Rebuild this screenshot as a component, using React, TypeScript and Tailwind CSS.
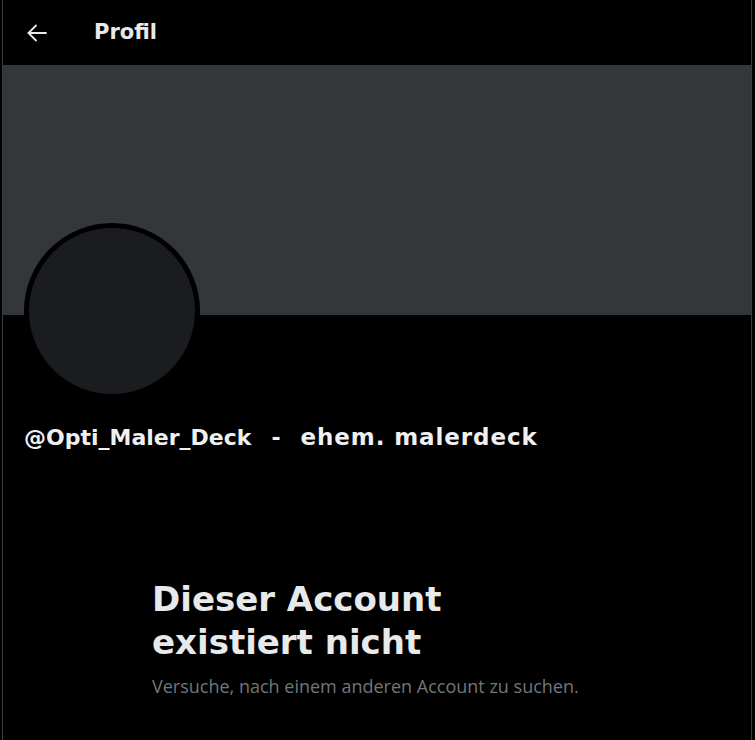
export default function App() {
  return (
    <main
      className="min-h-screen w-full bg-black text-[#e7e9ea]"
      style={{ fontFamily: '"DejaVu Sans", "Open Sans", sans-serif' }}
    >
      <div className="ml-[2px] mr-[3px] h-[740px] border-x border-[#3a3d40] bg-black">
        {/* Header */}
        <header className="flex h-[65px] items-center">
          <button className="ml-[24px] flex h-[20px] w-[20px] items-center justify-center text-[#e7e9ea]">
            <svg width="20" height="18" viewBox="0 0 20 18" fill="none" stroke="currentColor" strokeWidth="1.8" strokeLinecap="round" strokeLinejoin="round">
              <path d="M19 9H1.5" />
              <path d="M9 1.5 1.5 9 9 16.5" />
            </svg>
          </button>
          <h1 className="ml-[47px] text-[21px] font-bold leading-none">Profil</h1>
        </header>

        {/* Banner */}
        <div className="h-[250px] bg-[#33373a]" />

        {/* Avatar + name */}
        <div className="px-[21px]">
          <div className="-mt-[92px] h-[176px] w-[176px] rounded-full border-[5px] border-black bg-[#1b1c1f]" />
          <p className="mt-[23px] flex items-baseline whitespace-pre text-[22px] font-bold leading-[30px] text-[#f0f0f0]">
            <span>@Opti_Maler_Deck</span>
            <span className="ml-[20px]">-</span>
            <span className="ml-[20px] text-[23px] tracking-[0.9px]">ehem. malerdeck</span>
          </p>
        </div>

        {/* Empty state */}
        <div className="mt-[125px] pl-[149px]">
          <h2 className="text-[34px] font-bold leading-[43px]">
            Dieser Account
            <br />
            existiert nicht
          </h2>
          <p
            className="mt-[11px] text-[18px] leading-[22px] text-[#71767b]"
            style={{ fontFamily: '"Open Sans", sans-serif' }}
          >
            Versuche, nach einem anderen Account zu suchen.
          </p>
        </div>
      </div>
    </main>
  );
}
